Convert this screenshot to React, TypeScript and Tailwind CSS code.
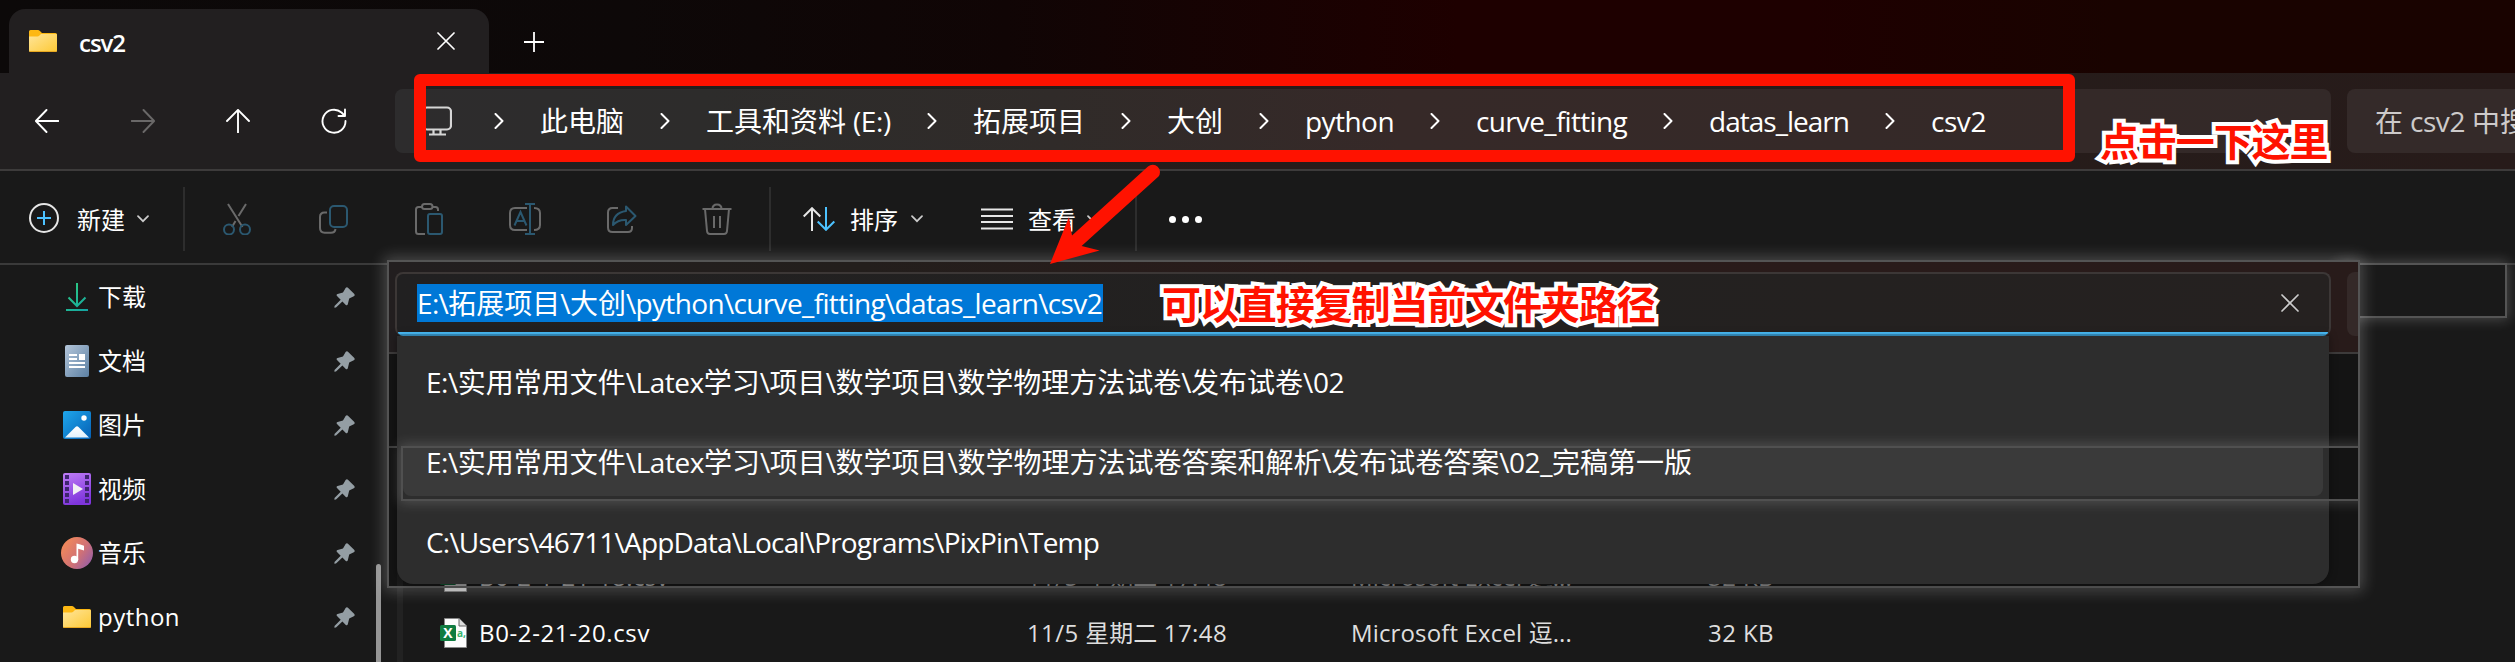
import React, { useLayoutEffect, useRef } from "react";

/** Text set to a given advance width: the slack is spread over the Latin letters only. */
function Label({ text, w, className = "" }: { text: string; w: number; className?: string }) {
  const ref = useRef<HTMLSpanElement>(null);
  const runs = text.match(/[\u3000-\u9fff]+|[^\u3000-\u9fff]+/g) ?? [];
  const isCjk = (s: string) => /[\u3000-\u9fff]/.test(s);
  useLayoutEffect(() => {
    const el = ref.current;
    if (!el) return;
    const latin = Array.from(el.querySelectorAll<HTMLElement>("[data-latin]"));
    latin.forEach((n) => (n.style.letterSpacing = "0px"));
    const count = latin.reduce((sum, n) => sum + (n.textContent ?? "").length, 0);
    if (!count) return;
    const spacing = (w - el.getBoundingClientRect().width) / count;
    latin.forEach((n) => (n.style.letterSpacing = `${spacing}px`));
  }, [text, w]);
  return (
    <span className="block shrink-0 whitespace-pre" style={{ width: w }}>
      <span ref={ref} className={`inline-block whitespace-pre ${className}`}>
        {runs.map((r, i) =>
          isCjk(r) ? <span key={i}>{r}</span> : <span key={i} data-latin="">{r}</span>
        )}
      </span>
    </span>
  );
}

const Folder = () => (
  <svg width="28" height="22" viewBox="0 0 28 22" className="shrink-0">
    <defs>
      <linearGradient id="fold" x1="0" y1="0" x2="1" y2="1">
        <stop offset="0" stopColor="#ffe59a" />
        <stop offset="1" stopColor="#fdc935" />
      </linearGradient>
    </defs>
    <path d="M0 1.5Q0 0 1.5 0H9q1 0 1.7.8L13 3h13.500q1.500 0 1.500 1.500V8H0z" fill="#fdb813" />
    <path d="M0 6.500h8.500q1 0 1.700-.8L12 4h15q1 0 1 1v15.500q0 1.500-1.500 1.500h-25Q0 22 0 20.500z" fill="url(#fold)" />
    <path d="M.5 21.500h27" stroke="#e9a820" />
  </svg>
);

const Pin = () => (
  <svg width="21" height="21" viewBox="0 0 21 21" fill="#949ea4">
    <path d="M11.600 1c.9-1 1.800-.9 2.600-.1l5.900 5.800c.9.9.8 2-.3 2.500l-4.600 2.300-1.400 5.700c-.3 1.200-1.300 1.400-2 .7l-3.400-3.500L2 20.600l-1.600.2.100-1.800 6.200-6.200-3.700-3.700c-.7-.7-.4-1.700.6-2l5.400-1.500z" />
  </svg>
);

const Chevron = () => (
  <div className="flex w-[82px] shrink-0 justify-center">
    <svg width="10" height="16" viewBox="0 0 10 16" fill="none" stroke="#fff" strokeWidth="2" strokeLinecap="round" strokeLinejoin="round">
      <path d="M1.500 1 8.500 8l-7 7" />
    </svg>
  </div>
);

const Down = () => (
  <svg width="12" height="8" viewBox="0 0 12 8" fill="none" stroke="#ccc" strokeWidth="1.700" strokeLinecap="round" className="shrink-0">
    <path d="M1 1.200 6 6.200l5-5" />
  </svg>
);

const Divider = () => <div className="h-16 w-0.5 shrink-0 bg-[#2d2d2d]" />;

const Cross = ({ color }: { color: string }) => (
  <svg width="18" height="18" viewBox="0 0 18 18" stroke={color} strokeWidth="1.700" strokeLinecap="round">
    <path d="M1 1l16 16M17 1L1 17" />
  </svg>
);

const G = "#6a6a6a";
const B = "#2b5870";

const tools = [
  <g fill="none" strokeWidth="2" key="cut">
    <path d="M7 1l14.500 23M25 1l-7.500 12M14.500 18l-3.500 6" stroke={G} />
    <circle cx="8" cy="26.500" r="5" stroke={B} />
    <circle cx="24" cy="26.500" r="5" stroke={B} />
  </g>,
  <g fill="none" strokeWidth="2" key="copy">
    <path d="M10 9.500H7.500Q3 9.500 3 14v11q0 4.700 4.700 4.700H14q4 0 4.500-3.700" stroke={G} />
    <rect x="13" y="3" width="17" height="21" rx="4" stroke={B} />
  </g>,
  <g fill="none" strokeWidth="2" key="paste">
    <path d="M9 4H5.500Q3 4 3 6.500v22Q3 31 5.500 31H12M20 4h2.500Q25 4 25 6.500V8" stroke={G} />
    <rect x="9" y="1" width="10.500" height="5" rx="2.500" stroke={G} />
    <rect x="15" y="11" width="14" height="20" rx="2" stroke={B} />
  </g>,
  <g fill="none" strokeWidth="2" key="rename">
    <path d="M18 5H6Q1 5 1 10v12q0 5 5 5h12M25 5q6 0 6 5v12q0 5-6 5" stroke={G} />
    <path d="M16 1h10M16 31h10M21 1v30M5.500 22.500 11.500 9l6 13.500M7.500 18h8" stroke={B} />
  </g>,
  <g fill="none" strokeWidth="2" key="share">
    <path d="M13 5H7.500Q3 5 3 9.500v15Q3 29 7.500 29H23q4 0 4-4v-2" stroke={G} />
    <path d="M21 3.500 30.500 13 21 22v-5q-8-.5-13 5 0-12 13-14z" stroke={B} strokeLinejoin="round" />
  </g>,
  <g fill="none" strokeWidth="2" key="trash" stroke={G}>
    <path d="M1.500 6h29M11.500 6q0-4.500 4.500-4.500T20.500 6M4 6l2 22q.3 3 3 3h14q2.700 0 3-3l2-22M13 13v12M19 13v12" />
  </g>,
];

const crumbs: [string, number][] = [
  ["此电脑", 84],
  ["工具和资料 (E:)", 185],
  ["拓展项目", 112],
  ["大创", 56],
  ["python", 89],
  ["curve_fitting", 151],
  ["datas_learn", 140],
  ["csv2", 55],
];

const icons: Record<string, React.ReactNode> = {
  down: (
    <svg width="22" height="28" viewBox="0 0 22 28" fill="none" strokeWidth="2">
      <defs>
        <linearGradient id="dl" gradientUnits="userSpaceOnUse" x1="0" y1="0" x2="22" y2="28">
          <stop offset="0" stopColor="#2fd07e" />
          <stop offset="1" stopColor="#14a3a3" />
        </linearGradient>
      </defs>
      <path d="M11 0v23M2.500 14.500 11 23l8.500-8.500M0 27h22" stroke="url(#dl)" />
    </svg>
  ),
  doc: (
    <svg width="24" height="32" viewBox="0 0 24 32">
      <defs>
        <linearGradient id="dc" x1="0" y1="0" x2="1" y2="1">
          <stop offset="0" stopColor="#b4c6da" />
          <stop offset="1" stopColor="#5c80a3" />
        </linearGradient>
      </defs>
      <rect width="24" height="32" rx="2" fill="url(#dc)" />
      <path d="M4 10h8M4 14h8M4 18h16M4 22h16" stroke="#fff" strokeWidth="2" />
      <rect x="14" y="9" width="6" height="6" fill="#fff" />
    </svg>
  ),
  pic: (
    <svg width="28" height="28" viewBox="0 0 28 28">
      <defs>
        <linearGradient id="pc" x1="0" y1="0" x2="1" y2="1">
          <stop offset="0" stopColor="#1fa7ec" />
          <stop offset="1" stopColor="#0560b5" />
        </linearGradient>
        <linearGradient id="pm" x1="0" y1="0" x2="0" y2="1">
          <stop offset="0" stopColor="#fff" />
          <stop offset="1" stopColor="#e2f1fd" />
        </linearGradient>
      </defs>
      <rect width="28" height="28" rx="2" fill="url(#pc)" />
      <circle cx="21" cy="7" r="2.700" fill="#fff" />
      <path d="M2 26.500 12.500 16q1.500-1.500 3 0L26 26.500z" fill="url(#pm)" />
    </svg>
  ),
  video: (
    <svg width="28" height="32" viewBox="0 0 28 32">
      <defs>
        <linearGradient id="vd" x1="0" y1="0" x2="0.300" y2="1">
          <stop offset="0" stopColor="#bf7df5" />
          <stop offset="1" stopColor="#7f35dc" />
        </linearGradient>
      </defs>
      <rect width="28" height="32" rx="2" fill="url(#vd)" />
      <path d="M4 2v28M24 2v28" stroke="#3f2570" strokeWidth="4" strokeDasharray="4 2" />
      <path d="M10 10v12l10-6z" fill="#f2f0f4" />
    </svg>
  ),
  music: (
    <svg width="32" height="32" viewBox="0 0 32 32">
      <defs>
        <linearGradient id="ms" x1="0" y1="0.200" x2="1" y2="0.900">
          <stop offset="0" stopColor="#f58b57" />
          <stop offset="0.550" stopColor="#d07176" />
          <stop offset="1" stopColor="#8f5cae" />
        </linearGradient>
      </defs>
      <circle cx="16" cy="16" r="16" fill="url(#ms)" />
      <circle cx="13.500" cy="22.500" r="3.700" fill="#fff" />
      <path d="M15.500 6.500q4 1 7.500 2.200v4.800l-5.800-1.700v11h-1.700z" fill="#fff" />
    </svg>
  ),
  folder: <Folder />,
};

const places: [string, string, number][] = [
  ["down", "下载", 48],
  ["doc", "文档", 48],
  ["pic", "图片", 48],
  ["video", "视频", 48],
  ["music", "音乐", 48],
  ["folder", "python", 82],
];

const Csv = () => (
  <svg width="27" height="30" viewBox="0 0 27 30" className="shrink-0">
    <path d="M4.500.5H19L26.500 8v21.500h-22z" fill="#fcfcfc" stroke="#888" />
    <path d="M19 .5V8h7.500" fill="#ddd" stroke="#666" />
    <rect y="7" width="16" height="16" rx="1.500" fill="#107c41" />
    <text x="8" y="20" textAnchor="middle" fontSize="14" fontWeight="700" fontFamily="Open Sans, sans-serif" fill="#fff">X</text>
    <text x="21.500" y="19" textAnchor="middle" fontSize="10" fontWeight="700" fontFamily="Open Sans, sans-serif" fill="#35b56f">a,</text>
  </svg>
);

function FileRow({ name, w, dim = false }: { name: string; w: number; dim?: boolean }) {
  return (
    <div className={dim ? "flex h-14 items-center pl-[37px] opacity-70" : "flex h-14 items-center pl-[37px]"}>
      <div className="flex w-[39px] shrink-0"><Csv /></div>
      <div className="w-[548px] shrink-0 text-white"><Label text={name} w={w} /></div>
      <div className="w-[324px] shrink-0 text-[#dedede]"><Label text="11/5 星期二 17:48" w={200} /></div>
      <div className="w-[357px] shrink-0 text-[#dedede]"><Label text="Microsoft Excel 逗..." w={221} /></div>
      <div className="shrink-0 text-[#dedede]"><Label text="32 KB" w={66} /></div>
    </div>
  );
}

export default function App() {
  return (
    <div className="relative flex h-[662px] w-[2515px] flex-col overflow-hidden bg-[#191919] font-['Open_Sans','Noto_Sans_CJK_SC',sans-serif] text-[24px] leading-[32px] text-white">
      {/* title bar */}
      <header className="flex h-[73px] shrink-0 items-end bg-[linear-gradient(90deg,#0c0909_0%,#0d0808_25%,#100505_40%,#1e0000_58%,#1e0000_72%,#190300_84%,#190300_100%)] pl-[9px]">
        <div className="flex h-16 w-[480px] items-center rounded-t-2xl bg-[#221f20] pl-5">
          <Folder />
          <div className="ml-[22px] flex-1 pt-1 font-semibold"><Label text="csv2" w={46} /></div>
          <div className="mr-[34px] pb-[1px]"><Cross color="#fff" /></div>
        </div>
        <svg width="20" height="20" viewBox="0 0 20 20" stroke="#fff" strokeWidth="1.800" className="mb-[21px] ml-[35px]">
          <path d="M10 0v20M0 10h20" />
        </svg>
      </header>

      {/* navigation bar */}
      <div className="flex h-[98px] shrink-0 items-center border-b-2 border-[#3d3b3b] bg-[linear-gradient(90deg,#221f20_0%,#221f20_22%,#231f1c_32%,#281b1a_50%,#2a1b1a_62%,#261c1a_80%,#271b1a_100%)] pl-[35px]">
        <svg width="24" height="24" viewBox="0 0 24 24" fill="none" stroke="#fff" strokeWidth="1.900" strokeLinecap="round" strokeLinejoin="round" className="shrink-0">
          <path d="M23.500 12H1M11.500 1 .9 12l10.600 11" />
        </svg>
        <svg width="24" height="24" viewBox="0 0 24 24" fill="none" stroke="#6a6868" strokeWidth="1.900" strokeLinecap="round" strokeLinejoin="round" className="ml-[72px] shrink-0">
          <path d="M.5 12H23M12.500 1l10.600 11-10.600 11" />
        </svg>
        <svg width="24" height="24" viewBox="0 0 24 24" fill="none" stroke="#fff" strokeWidth="1.900" strokeLinecap="round" strokeLinejoin="round" className="ml-[71px] shrink-0">
          <path d="M12 23.500V1M1 12 12 .9 23 12" />
        </svg>
        <svg width="26" height="26" viewBox="0 0 26 26" fill="none" stroke="#fff" strokeWidth="1.900" strokeLinecap="round" strokeLinejoin="round" className="ml-[71px] shrink-0">
          <path d="M24.500 13A11.500 11.500 0 1 1 20.500 4.500L24 8M24 1.500V8h-6.500" />
        </svg>
        <div className="ml-[48px] flex h-16 w-[1936px] shrink-0 items-center rounded-lg bg-[linear-gradient(90deg,#2d2c2d_0%,#2d2c2b_16%,#302b29_34%,#362928_52%,#352928_75%,#332928_100%)] pl-[27px] text-[28px] leading-[38px]">
          <svg width="30" height="30" viewBox="0 0 30 30" fill="none" stroke="#d6d6d6" strokeWidth="2.200" className="shrink-0">
            <rect x="1" y="1.500" width="28" height="22" rx="4" />
            <path d="M11.500 23.500V28M18.500 23.500V28M7 28.500h17" />
          </svg>
          <div className="ml-[6px] flex items-center">
            {crumbs.map(([t, w]) => (
              <React.Fragment key={t}>
                <Chevron />
                <Label text={t} w={w} />
              </React.Fragment>
            ))}
          </div>
        </div>
        <div className="ml-4 flex h-16 w-[300px] shrink-0 items-center rounded-lg bg-[#342a29] pl-7 text-[28px] leading-[38px] text-[#cdcaca]">
          <Label text="在 csv2 中搜索" w={181} />
        </div>
      </div>

      {/* command bar */}
      <div className="flex h-[94px] shrink-0 items-center border-b-2 border-[#3a3a3a] bg-[#191919] pl-[29px] pt-1">
        <svg width="30" height="30" viewBox="0 0 30 30" fill="none" strokeWidth="2" className="mb-0.5">
          <circle cx="15" cy="15" r="14" stroke="#e6e6e6" />
          <path d="M15 8v14M8 15h14" stroke="#4cc2ff" />
        </svg>
        <div className="ml-[18px] mr-3 pt-0.5"><Label text="新建" w={48} /></div>
        <Down />
        <div className="ml-[34px]"><Divider /></div>
        <div className="ml-[36px] flex gap-16">
          {tools.map((t, i) => (
            <svg key={i} width="32" height="32" viewBox="0 0 32 32">{t}</svg>
          ))}
        </div>
        <div className="ml-[36px]"><Divider /></div>
        <svg width="32" height="24" viewBox="0 0 32 24" fill="none" strokeWidth="2" className="ml-8">
          <path d="M9 24V1M.7 9.500 9 1.200l8.300 8.300" stroke="#e6e6e6" />
          <path d="M23 0v23M14.700 14.500l8.300 8.300 8.300-8.300" stroke="#4cc2ff" />
        </svg>
        <div className="ml-[15px] mr-[13px] pt-0.5"><Label text="排序" w={48} /></div>
        <Down />
        <svg width="32" height="22" viewBox="0 0 32 22" stroke="#e6e6e6" strokeWidth="2" className="ml-[58px]">
          <path d="M0 1.500h32M0 8h32M0 14h32M0 20.500h32" />
        </svg>
        <div className="ml-[15px] mr-[11px] pt-0.5"><Label text="查看" w={48} /></div>
        <Down />
        <div className="ml-9"><Divider /></div>
        <div className="ml-[32px] flex gap-[6px]">
          <i className="size-[7px] rounded-full bg-white" />
          <i className="size-[7px] rounded-full bg-white" />
          <i className="size-[7px] rounded-full bg-white" />
        </div>
      </div>

      {/* sidebar and file list */}
      <main className="flex min-h-0 flex-1">
        <nav className="flex w-[376px] shrink-0 flex-col">
          {places.map(([icon, t, w]) => (
            <div key={t} className="flex h-16 shrink-0 items-center pl-[61px] pr-[21px]">
              <div className="flex w-8 justify-center">{icons[icon]}</div>
              <div className="ml-[5px] flex-1"><Label text={t} w={w} /></div>
              <Pin />
            </div>
          ))}
        </nav>
        <div className="flex w-[21px] items-end">
          <div className="h-[98px] w-[5px] rounded-t bg-[#959595]" />
        </div>
        <section className="flex flex-1 flex-col border-l-[6px] border-[#222] pt-[284px]">
          <FileRow name="B0-2-1-21-18.csv" w={190} dim />
          <FileRow name="B0-2-21-20.csv" w={171} />
        </section>
      </main>

      {/* outlined strip at the right */}
      <div className="absolute left-[2340px] top-[265px] h-[51px] w-[165px] bg-[#191919] shadow-[0_0_0_2px_#545454,0_0_12px_4px_rgba(255,255,255,0.2)]" />

      {/* address popover */}
      <div className="absolute left-[389px] top-[262px] h-[324px] w-[1969px] shadow-[0_0_0_2px_#545454,0_0_14px_5px_rgba(255,255,255,0.22)]">
        <div className="flex h-full flex-col overflow-hidden">
          <div className="flex h-[92px] shrink-0 items-start border-b-2 border-[#3d3b3b] bg-[linear-gradient(90deg,#221e1f_0%,#231e1c_24%,#2a1b1a_48%,#281b1a_100%)] pl-1.5 pt-2.5">
            <div className="flex h-16 w-[1936px] shrink-0 flex-col overflow-hidden rounded-lg border-x-2 border-t-2 border-[#3c3736] bg-[linear-gradient(90deg,#212021_0%,#232120_50%,#252120_100%)]">
              <div className="flex flex-1 items-center pl-5 pr-[30px]">
                <div className="flex h-[38px] w-[686px] items-center bg-[#0078d7] text-[28px] leading-[38px]">
                  <Label text={"E:\\拓展项目\\大创\\python\\curve_fitting\\datas_learn\\csv2"} w={685} />
                </div>
                <div className="ml-auto"><Cross color="#ccc" /></div>
              </div>
              <div className="h-1 border-t-2 border-[#4cc2ff] bg-[#3b9cd0]" />
            </div>
            <div className="ml-4 h-16 w-8 shrink-0 rounded-lg bg-[#342928]" />
          </div>
          <div className="flex-1 bg-black/20" />
        </div>
        <div className="absolute left-2 top-[74px] flex h-[248px] w-[1932px] flex-col rounded-b-2xl bg-[#2d2d2d] pt-1.5 text-[28px] leading-[38px] shadow-[0_0_8px_rgba(0,0,0,0.4)]">
          <div className="flex h-20 items-center pl-[29px]">
            <Label text={"E:\\实用常用文件\\Latex学习\\项目\\数学项目\\数学物理方法试卷\\发布试卷\\02"} w={918} />
          </div>
          <div className="h-20" />
          <div className="flex h-20 items-center pl-[29px]">
            <Label text={"C:\\Users\\46711\\AppData\\Local\\Programs\\PixPin\\Temp"} w={673} />
          </div>
        </div>
        {/* highlighted suggestion */}
        <div className="absolute left-0 top-[150px] h-[120px] w-[1969px] overflow-hidden">
          <div className="mt-[34px] h-0.5 w-2 bg-[#3a3a3a]" />
          <div className="ml-[14px] flex h-[51px] w-[1980px] shadow-[0_0_0_2px_#505050,0_0_12px_4px_rgba(255,255,255,0.17)]">
            <div className="flex h-[48px] w-[1920px] rounded-b-lg bg-[#3a3a3a] pl-[23px] text-[28px] leading-[28px]">
              <Label text={"E:\\实用常用文件\\Latex学习\\项目\\数学项目\\数学物理方法试卷答案和解析\\发布试卷答案\\02_完稿第一版"} w={1266} />
            </div>
          </div>
        </div>
      </div>

      {/* annotations */}
      <div className="absolute left-[414px] top-[74px] h-[88px] w-[1661px] rounded-md border-[12px] border-[#ff1200]" />
      <svg width="130" height="110" viewBox="1040 160 130 110" className="absolute left-[1040px] top-[160px]">
        <path d="M1050 264l19-47 3 18.500 76-69a7.300 7.300 0 0 1 10.500 10L1081.600 246l18 4.500z" fill="#ff1200" />
      </svg>
      <div className="absolute left-[2100px] top-[117px] whitespace-nowrap text-[39px] font-bold leading-[48px] tracking-[-1.1px] text-[#ff1200] [-webkit-text-stroke:8px_white] [paint-order:stroke_fill]">
        点击一下这里
      </div>
      <div className="absolute left-[1162px] top-[280px] whitespace-nowrap text-[39px] font-bold leading-[48px] tracking-[-1.1px] text-[#ff1200] [-webkit-text-stroke:8px_white] [paint-order:stroke_fill]">
        可以直接复制当前文件夹路径
      </div>
    </div>
  );
}
